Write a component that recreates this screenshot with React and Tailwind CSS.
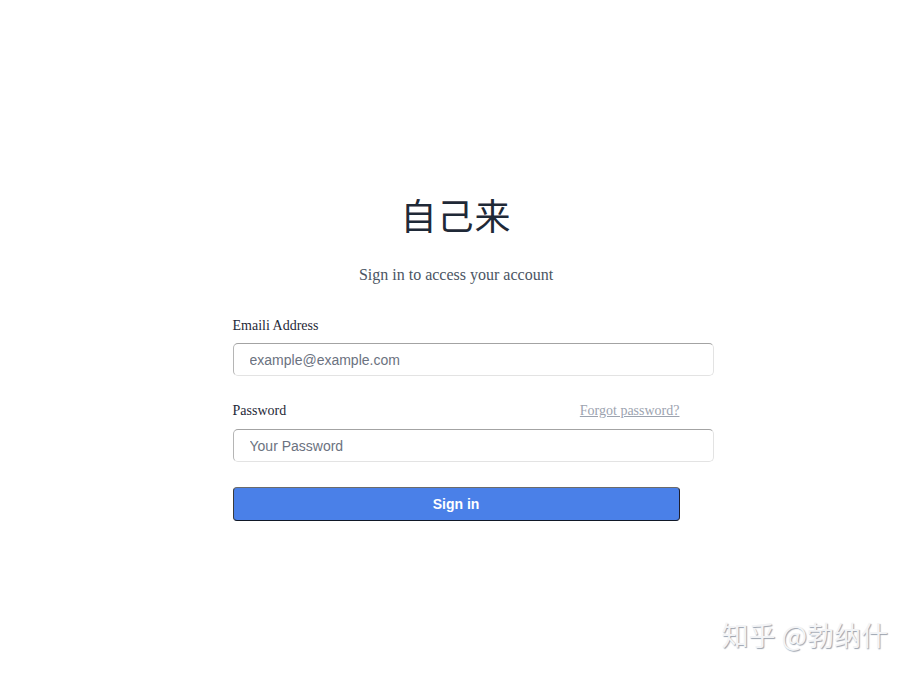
export default function App() {
  return (
    <div className="relative h-[674px] w-full overflow-hidden bg-white">
      <div className="flex flex-col items-center pt-[194px]">
        <h1 className="text-[36px] leading-[40px] font-normal text-[#1f2937] [font-family:'Noto_Sans_CJK_SC',serif] tracking-[1px]">
          自己来
        </h1>
        <p className="mt-[29px] text-[16px] leading-[24px] text-[#4b5563] [font-family:'Liberation_Serif',serif]">
          Sign in to access your account
        </p>
        <form className="mt-[29px] w-[447px]" onSubmit={(e) => e.preventDefault()}>
          <label className="block text-[14px] leading-[20px] text-[#1f2937] [font-family:'Liberation_Serif',serif]">
            Emaili Address
          </label>
          <input
            type="email"
            placeholder="example@example.com"
            className="mt-[7px] box-content block h-[31px] w-full rounded-[5px] border border-t-[#a3a3a3] border-l-[#b5b5b5] border-r-[#e3e3e3] border-b-[#e3e3e3] px-4 py-0 text-[14px] text-[#374151] placeholder:text-[#6b7280] outline-none [font-family:'Liberation_Sans',sans-serif]"
          />
          <div className="mt-[25px] flex items-center justify-between">
            <label className="block text-[14px] leading-[20px] text-[#1f2937] [font-family:'Liberation_Serif',serif]">
              Password
            </label>
            <a
              href="#"
              className="text-[14px] leading-[20px] text-[#9ca3af] underline [font-family:'Liberation_Serif',serif]"
            >
              Forgot password?
            </a>
          </div>
          <input
            type="password"
            placeholder="Your Password"
            className="mt-[8px] box-content block h-[31px] w-full rounded-[5px] border border-t-[#a3a3a3] border-l-[#b5b5b5] border-r-[#e3e3e3] border-b-[#e3e3e3] px-4 py-0 text-[14px] text-[#374151] placeholder:text-[#6b7280] outline-none [font-family:'Liberation_Sans',sans-serif]"
          />
          <button
            type="submit"
            className="mt-[25px] block h-[34px] w-full rounded-[4px] border border-t-[#6b6b6b] border-l-[#3a3a3a] border-r-[#1f1f2e] border-b-[#111827] bg-[#4a80e8] text-[14px] font-bold text-white [font-family:'Liberation_Sans',sans-serif]"
          >
            Sign in
          </button>
        </form>
      </div>
      <div className="absolute bottom-[22px] right-[24px] text-[27px] leading-[34px] text-[#f3f4f6] [font-family:'Noto_Sans_CJK_SC',sans-serif] [text-shadow:1px_1px_1px_#9ca3af]">
        知乎 @勃纳什
      </div>
    </div>
  );
}
